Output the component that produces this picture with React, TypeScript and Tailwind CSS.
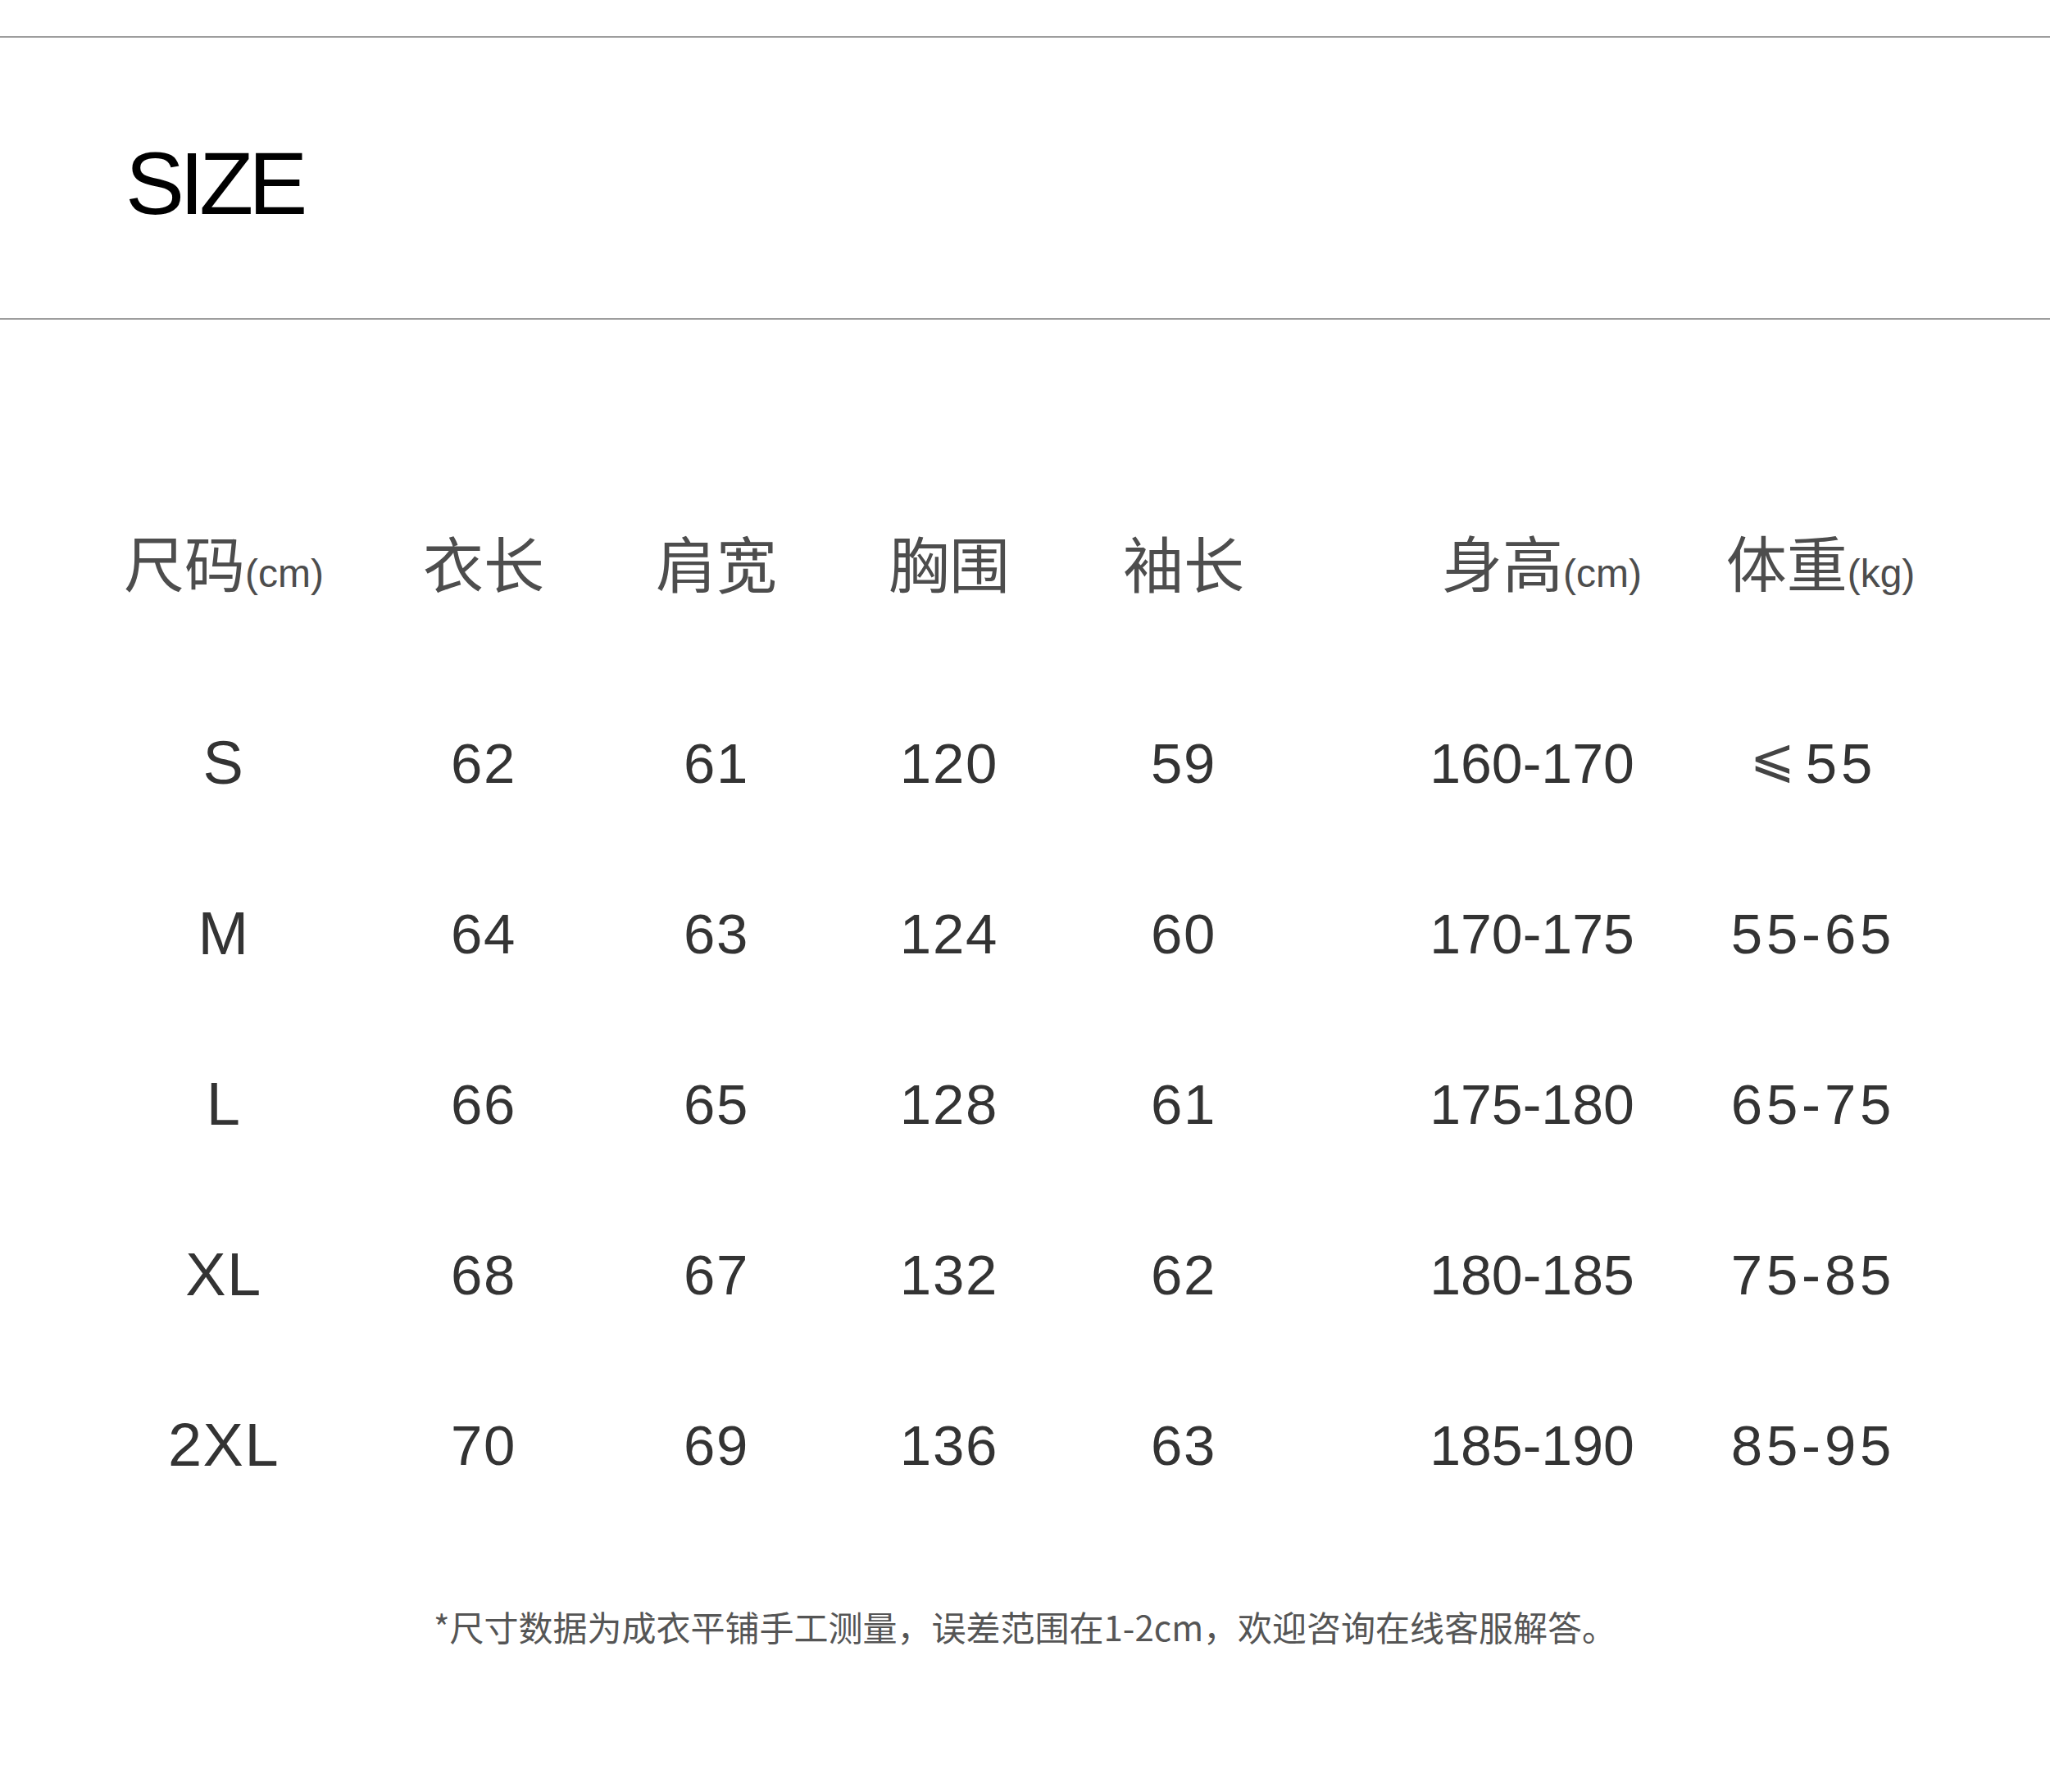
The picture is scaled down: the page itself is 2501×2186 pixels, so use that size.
import React from 'react';

const rows = [
  ['S', '62', '61', '120', '59', '160-170', '≤55'],
  ['M', '64', '63', '124', '60', '170-175', '55-65'],
  ['L', '66', '65', '128', '61', '175-180', '65-75'],
  ['XL', '68', '67', '132', '62', '180-185', '75-85'],
  ['2XL', '70', '69', '136', '63', '185-190', '85-95'],
];

const headers: { label: string; unit?: string; shift?: string }[] = [
  { label: '尺码', unit: '(cm)' },
  { label: '衣长' },
  { label: '肩宽' },
  { label: '胸围' },
  { label: '袖长' },
  { label: '身高', unit: '(cm)', shift: 'pl-[24px]' },
  { label: '体重', unit: '(kg)', shift: 'pl-[18px]' },
];

const grid =
  'grid grid-cols-[316px_318px_250px_318px_254px_596px_90px] pl-[115px]';

const cjk = { fontFamily: '"Noto Sans CJK SC", "Noto Sans", sans-serif' };
const latin = { fontFamily: '"Liberation Sans", Arial, sans-serif' };

const Cell: React.FC<{ value: string }> = ({ value }) => {
  // the first row's weight uses a slanted ≤ glyph
  if (value.startsWith('≤')) {
    return (
      <span className="flex items-center">
        <span
          className="text-[66px] mr-[8px] text-[#444] -translate-y-[6px]"
          style={{ fontFamily: '"DejaVu Sans", sans-serif' }}
        >
          ⩽
        </span>
        {value.slice(1)}
      </span>
    );
  }
  return <span>{value}</span>;
};

export default function App() {
  return (
    <div className="w-[2501px] h-[2186px] bg-white overflow-hidden">
      <div className="pt-[44px]">
        <div className="h-[2px] bg-[#9d9d9d]" />
      </div>

      {/* Title */}
      <div className="h-[342px] flex items-center pl-[153px] pt-[14px]">
        <h1
          className="text-[108px] leading-none text-black tracking-[-0.055em]"
          style={latin}
        >
          SIZE
        </h1>
      </div>
      <div className="h-[2px] bg-[#9d9d9d]" />

      {/* Table */}
      <div className="mt-[197px]">
        <div className={`${grid} h-[208px]`}>
          {headers.map((h) => (
            <div
              key={h.label}
              className={`flex items-center justify-center whitespace-nowrap ${h.shift ?? ''}`}
            >
              <span className="flex items-baseline text-[#4d4d4d] pb-[12px]">
                <span className="text-[74px] leading-none" style={cjk}>
                  {h.label}
                </span>
                {h.unit && (
                  <span className="text-[48px] leading-none" style={latin}>
                    {h.unit}
                  </span>
                )}
              </span>
            </div>
          ))}
        </div>

        <div className="mt-[32px]">
          {rows.map((r) => (
            <div key={r[0]} className={`${grid} h-[208px]`}>
              {r.map((v, i) => (
                <div
                  key={i}
                  className={`flex items-center justify-center whitespace-nowrap leading-none text-[#333] ${
                    i === 5
                      ? 'text-[68px]'
                      : i === 6
                        ? 'text-[69px] tracking-[0.07em]'
                        : i === 0
                          ? 'text-[74px] tracking-[0.02em]'
                          : 'text-[69px] tracking-[0.025em]'
                  }`}
                  style={latin}
                >
                  <Cell value={v} />
                </div>
              ))}
            </div>
          ))}
        </div>
      </div>

      {/* Note */}
      <div className="mt-[77px] h-[80px] flex items-center justify-center">
        <p className="text-[42px] leading-none text-[#555]" style={cjk}>
          *尺寸数据为成衣平铺手工测量，误差范围在1-2cm，欢迎咨询在线客服解答。
        </p>
      </div>
    </div>
  );
}
